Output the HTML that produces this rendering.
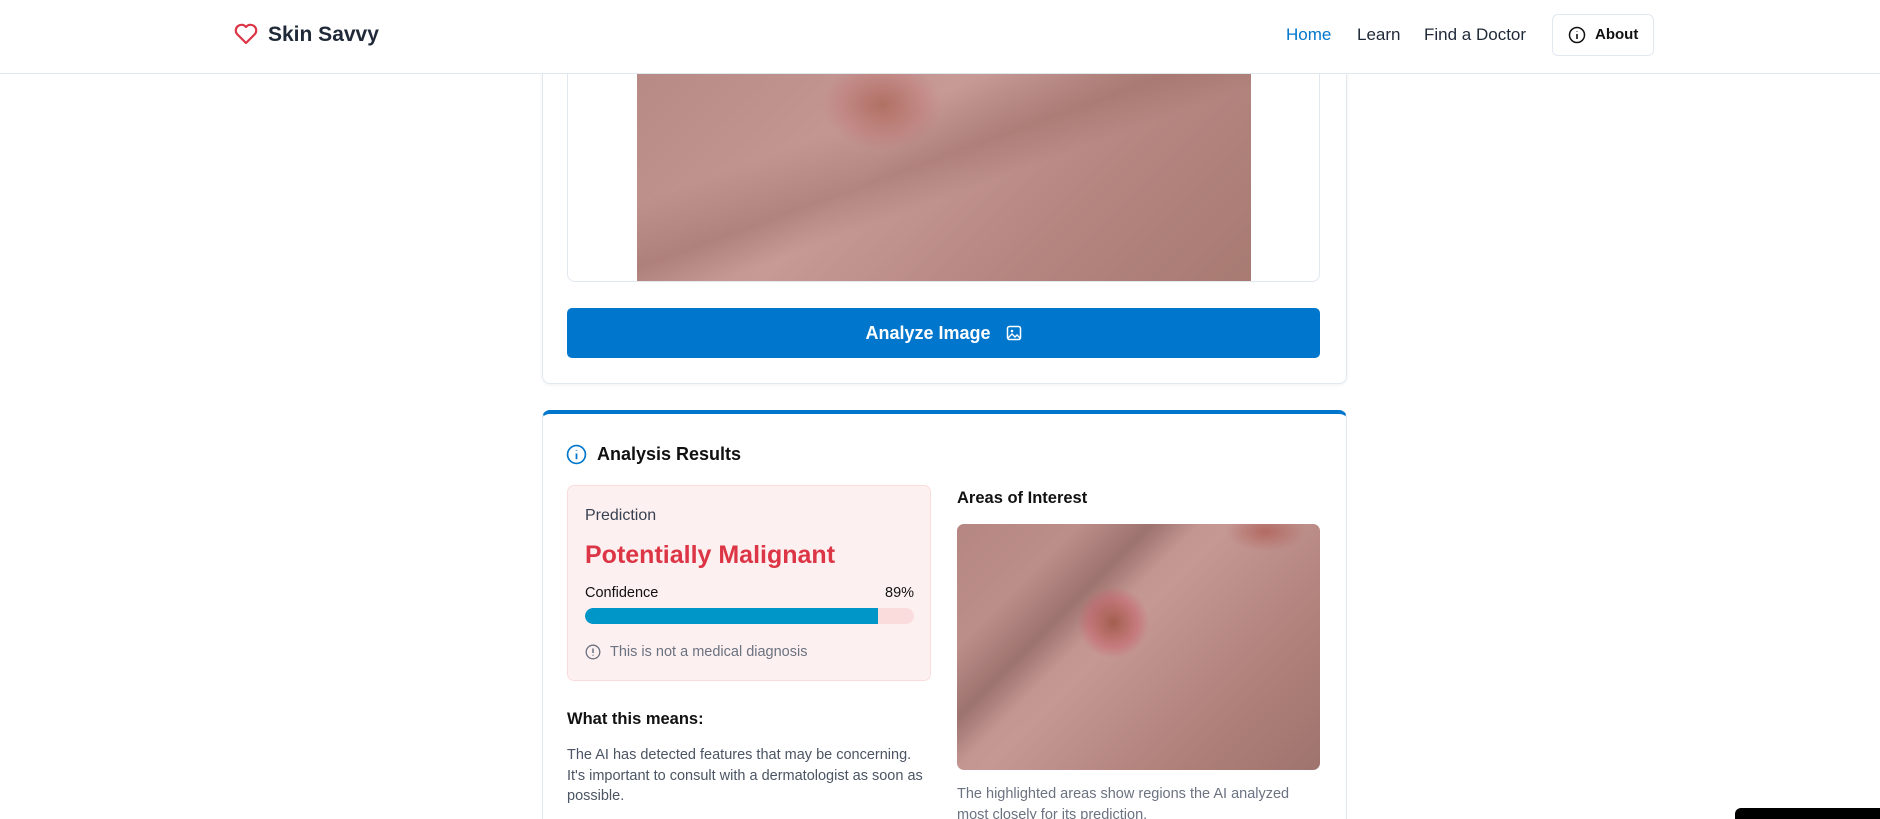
<!DOCTYPE html>
<html><head><meta charset="utf-8"><style>
*{box-sizing:border-box;margin:0;padding:0}
html,body{width:1880px;height:819px;overflow:hidden}
body{background:#fff;font-family:"Liberation Sans",sans-serif;color:#1f2937}
#wrap{position:relative;width:1880px;height:819px;overflow:hidden}
.hdr{position:absolute;left:0;top:0;width:1880px;height:74px;border-bottom:1px solid #e2e8f0;background:#fff;z-index:2}
.abs{position:absolute}
.skin{background:
 radial-gradient(ellipse 60px 45px at 40% 15%,rgba(160,80,60,.55),rgba(190,100,100,.25) 70%,transparent),
 linear-gradient(160deg,rgba(255,255,255,0) 30%,rgba(120,70,60,.25) 45%,rgba(255,255,255,0) 55%),
 linear-gradient(135deg,#b88a86,#c79a96 40%,#b58580 70%,#a77a72);}
.skin2{background:
 radial-gradient(ellipse 45px 45px at 43% 40%,rgba(150,70,50,.7),rgba(200,90,100,.45) 55%,transparent 80%),
 linear-gradient(135deg,transparent 20%,rgba(90,55,50,.35) 32%,transparent 40%),
 radial-gradient(ellipse 40px 20px at 85% 3%,rgba(170,80,70,.6),transparent),
 linear-gradient(135deg,#b58682,#c59894 45%,#b0807a 75%,#9f746e);}
</style></head><body><div id="wrap">
<div class="hdr">
 <svg class="abs" style="left:234px;top:23px" width="24" height="22" viewBox="0 0 24 22"><path d="M12 20 L3 11 A5.3 5.3 0 0 1 12 4 A5.3 5.3 0 0 1 21 11 Z" fill="none" stroke="#dc3545" stroke-width="2.2" stroke-linejoin="round"/></svg>
 <div class="abs" style="left:268px;top:23px;font-size:21px;font-weight:bold;color:#1f2937">Skin Savvy</div>
 <div class="abs" style="left:1286px;top:25px;font-size:17px;color:#0077cc">Home</div>
 <div class="abs" style="left:1357px;top:25px;font-size:17px">Learn</div>
 <div class="abs" style="left:1424px;top:25px;font-size:17px">Find a Doctor</div>
 <div class="abs" style="left:1552px;top:14px;width:102px;height:42px;border:1px solid #e2e8f0;border-radius:6px"></div>
 <svg class="abs" style="left:1568px;top:26px" width="18" height="18" viewBox="0 0 18 18"><circle cx="9" cy="9" r="7.5" fill="none" stroke="#111" stroke-width="1.5"/><path d="M9 8v5M9 5.5v.5" stroke="#111" stroke-width="1.6"/></svg>
 <div class="abs" style="left:1595px;top:26px;font-size:15px;font-weight:bold;color:#111">About</div>
</div>

<div class="abs" style="left:542px;top:40px;width:805px;height:344px;border:1px solid #e2e8f0;border-radius:8px;box-shadow:0 1px 3px rgba(0,0,0,.06)"></div>
<div class="abs" style="left:567px;top:40px;width:753px;height:242px;border:1px solid #e2e8f0;border-radius:8px"></div>
<div class="abs skin" style="left:637px;top:74px;width:614px;height:207px"></div>
<div class="abs" style="left:567px;top:308px;width:753px;height:50px;background:#0077cc;border-radius:5px;color:#fff;font-size:18px;font-weight:bold;text-align:center;line-height:50px">Analyze Image &nbsp;&nbsp;<svg width="16" height="16" viewBox="0 0 16 16" style="vertical-align:-2px"><rect x="1.5" y="1.5" width="13" height="13" rx="2" fill="none" stroke="#fff" stroke-width="1.5"/><circle cx="6" cy="6" r="1.3" fill="#fff"/><path d="M2 13l4-4 3 3 2-2 3 3" fill="none" stroke="#fff" stroke-width="1.4"/></svg></div>

<div class="abs" style="left:542px;top:410px;width:805px;height:409px;border:1px solid #e2e8f0;border-bottom:none;border-top:4px solid #0077cc;border-radius:8px 8px 0 0"></div>
<svg class="abs" style="left:566px;top:444px" width="21" height="21" viewBox="0 0 20 20"><circle cx="10" cy="10" r="8.5" fill="none" stroke="#0077cc" stroke-width="1.6"/><path d="M10 9v5.5M10 6v.6" stroke="#0077cc" stroke-width="1.7"/></svg>
<div class="abs" style="left:597px;top:444px;font-size:18px;font-weight:bold;color:#111">Analysis Results</div>

<div class="abs" style="left:567px;top:485px;width:364px;height:196px;background:#fdf0f0;border:1px solid #fbdcdc;border-radius:7px"></div>
<div class="abs" style="left:585px;top:507px;font-size:16px;color:#374151">Prediction</div>
<div class="abs" style="left:585px;top:541px;font-size:25px;font-weight:bold;color:#dc3545">Potentially Malignant</div>
<div class="abs" style="left:585px;top:585px;font-size:14.5px;color:#111">Confidence</div>
<div class="abs" style="left:885px;top:585px;font-size:14.5px;color:#111">89%</div>
<div class="abs" style="left:585px;top:608px;width:329px;height:16px;background:#fadcdc;border-radius:8px;overflow:hidden"><div style="width:293px;height:16px;background:#0096c7;border-radius:8px 0 0 8px"></div></div>
<svg class="abs" style="left:585px;top:644px" width="16" height="16" viewBox="0 0 16 16"><circle cx="8" cy="8" r="6.8" fill="none" stroke="#6b7280" stroke-width="1.3"/><path d="M8 4.5v4.5M8 10.8v.8" stroke="#6b7280" stroke-width="1.5"/></svg>
<div class="abs" style="left:610px;top:644px;font-size:14.5px;color:#6b7280">This is not a medical diagnosis</div>

<div class="abs" style="left:567px;top:710px;font-size:16.5px;font-weight:bold;color:#111">What this means:</div>
<div class="abs" style="left:567px;top:745px;width:362px;font-size:14.5px;line-height:20.5px;color:#4b5563">The AI has detected features that may be concerning. It's important to consult with a dermatologist as soon as possible.</div>

<div class="abs" style="left:957px;top:489px;font-size:16.5px;font-weight:bold;color:#111">Areas of Interest</div>
<div class="abs skin2" style="left:957px;top:524px;width:363px;height:246px;border-radius:7px"></div>
<div class="abs" style="left:957px;top:784px;width:350px;height:35px;overflow:hidden;font-size:14.5px;line-height:21px;color:#6b7280">The highlighted areas show regions the AI analyzed most closely for its prediction.</div>

<div class="abs" style="left:1735px;top:808px;width:145px;height:11px;background:#000;border-radius:6px 0 0 0"></div>
</div></body></html>
